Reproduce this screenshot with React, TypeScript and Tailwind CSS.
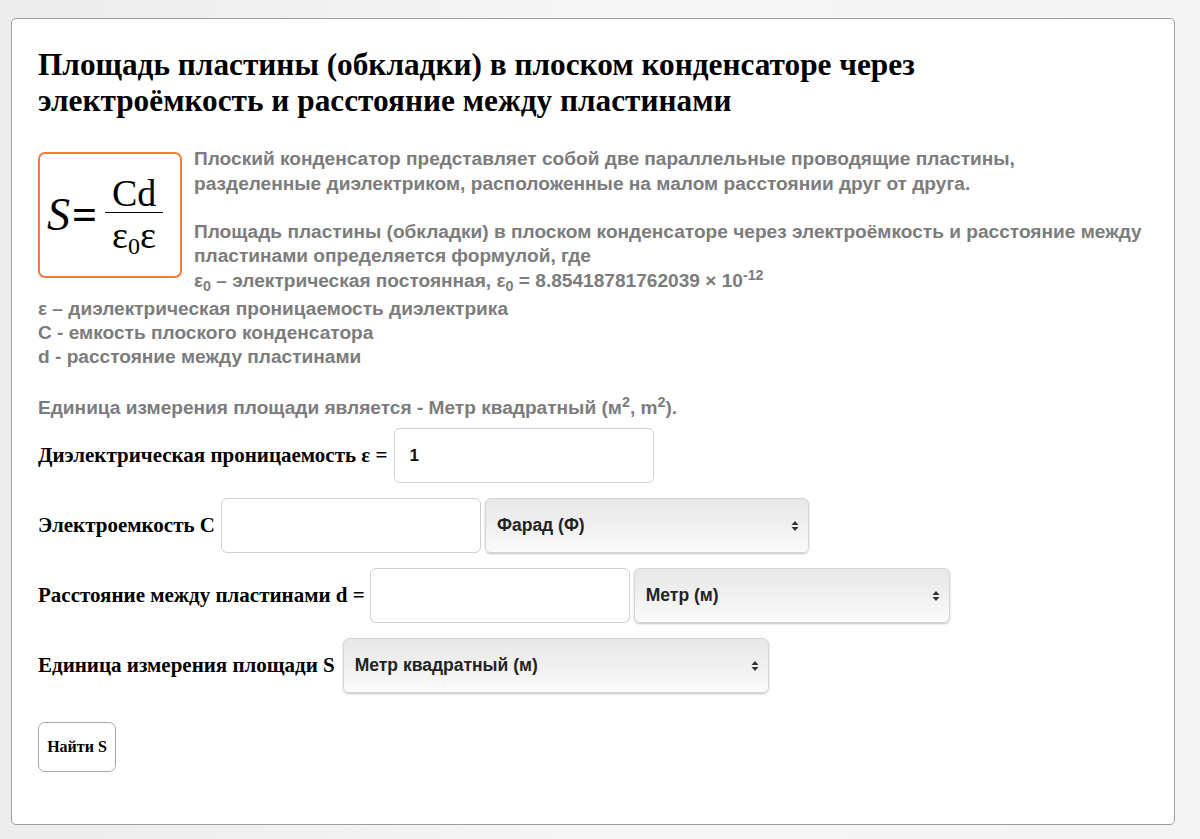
import React from "react";

const serif = { fontFamily: '"Liberation Serif", "Times New Roman", serif' };

function Arrows() {
  return (
    <svg width="8" height="12" viewBox="0 0 8 12" className="shrink-0">
      <path d="M4 1 L7.5 5 L0.5 5 Z" fill="#333" />
      <path d="M4 11 L7.5 7 L0.5 7 Z" fill="#333" />
    </svg>
  );
}

function Select({ label, w }: { label: string; w: string }) {
  return (
    <div
      className={`${w} h-[55px] rounded-[6px] border border-[#d6d6d6] bg-gradient-to-b from-[#e8e8e8] via-[#f0f0f0] to-[#fbfbfb] shadow-[0_1px_2px_rgba(0,0,0,0.25)] flex items-center justify-between pl-[11px] pr-[9px] text-[17.5px] font-bold text-[#222]`}
    >
      <span>{label}</span>
      <Arrows />
    </div>
  );
}

function Input({ value = "" }: { value?: string }) {
  return (
    <div className="w-[260px] h-[55px] rounded-[6px] border border-[#cfcfcf] bg-white flex items-center pl-[15px] text-[17px] font-bold text-[#111]">
      {value}
    </div>
  );
}

export default function App() {
  return (
    <div
      className="w-[1200px] h-[839px] bg-gradient-to-r from-[#ececec] via-[#f6f6f6] to-[#f4f4f4] pt-[18px] pl-[11px]"
      style={{ fontFamily: '"Liberation Sans", Arial, sans-serif' }}
    >
      <div className="w-[1164px] h-[807px] bg-white border border-[#a59d96] rounded-[5px] pl-[26px] pr-[20px] pt-[28px]">
        <h1 className="text-[31.3px] leading-[36px] font-bold text-black" style={serif}>
          Площадь пластины (обкладки) в плоском конденсаторе через
          <br />
          электроёмкость и расстояние между пластинами
        </h1>

        <div className="mt-[28px] text-[19.1px] font-bold text-[#7c7c7c] whitespace-nowrap">
          <div className="float-left mt-[5px] mr-[12px] w-[144px] h-[126px] border-2 border-[#f47b3c] rounded-[7px] flex items-center pl-[7px]" style={serif}>
            <span className="italic text-[46px] text-black font-normal leading-none">S</span>
            <span className="text-[44px] text-black font-bold leading-none ml-[2px]">=</span>
            <div className="flex flex-col items-center ml-[8px] font-normal text-black">
              <span className="text-[38px] leading-[38px] px-[4px]">Cd</span>
              <div className="w-[58px] h-[1px] bg-black"></div>
              <span className="text-[38px] leading-[44px]">
                ε<sub className="text-[24px]">0</sub>ε
              </span>
            </div>
          </div>
          <div className="h-[25px] leading-[24px]">
            Плоский конденсатор представляет собой две параллельные проводящие пластины,
          </div>
          <div className="h-[24px] leading-[24px]">
            разделенные диэлектриком, расположенные на малом расстоянии друг от друга.
          </div>
          <div className="h-[24px]"></div>
          <div className="h-[24px] leading-[24px]">
            Площадь пластины (обкладки) в плоском конденсаторе через электроёмкость и расстояние между
          </div>
          <div className="h-[25px] leading-[24px]">пластинами определяется формулой, где</div>
          <div className="h-[28px] leading-[24px]">
            ε<sub>0</sub> – электрическая постоянная, ε<sub>0</sub> = 8.85418781762039 × 10<sup>-12</sup>
          </div>
          <div className="h-[24px] leading-[24px]">ε – диэлектрическая проницаемость диэлектрика</div>
          <div className="h-[24px] leading-[24px]">C - емкость плоского конденсатора</div>
          <div className="h-[24px] leading-[24px]">d - расстояние между пластинами</div>
          <div className="clear-both"></div>
          <div className="mt-[27px] h-[24px] leading-[24px]">
            Единица измерения площади является - Метр квадратный (м<sup>2</sup>, m<sup>2</sup>).
          </div>
        </div>

        <div className="mt-[8px] flex flex-col gap-[15px]">
          <div className="flex items-center">
            <span className="text-[21px] font-bold text-black mr-[6px]" style={serif}>
              Диэлектрическая проницаемость ε =
            </span>
            <Input value="1" />
          </div>
          <div className="flex items-center">
            <span className="text-[21px] font-bold text-black mr-[6px]" style={serif}>
              Электроемкость C
            </span>
            <Input />
            <div className="ml-[4px]">
              <Select label="Фарад (Ф)" w="w-[324px]" />
            </div>
          </div>
          <div className="flex items-center">
            <span className="text-[21px] font-bold text-black mr-[5px]" style={serif}>
              Расстояние между пластинами d =
            </span>
            <Input />
            <div className="ml-[4px]">
              <Select label="Метр (м)" w="w-[316px]" />
            </div>
          </div>
          <div className="flex items-center">
            <span className="text-[21px] font-bold text-black mr-[8px]" style={serif}>
              Единица измерения площади S
            </span>
            <Select label="Метр квадратный (м)" w="w-[426px]" />
          </div>
        </div>

        <button
          className="mt-[29px] w-[78px] h-[50px] rounded-[7px] border border-[#a9a9a9] bg-white text-[16px] font-bold text-black"
          style={serif}
        >
          Найти S
        </button>
      </div>
    </div>
  );
}
